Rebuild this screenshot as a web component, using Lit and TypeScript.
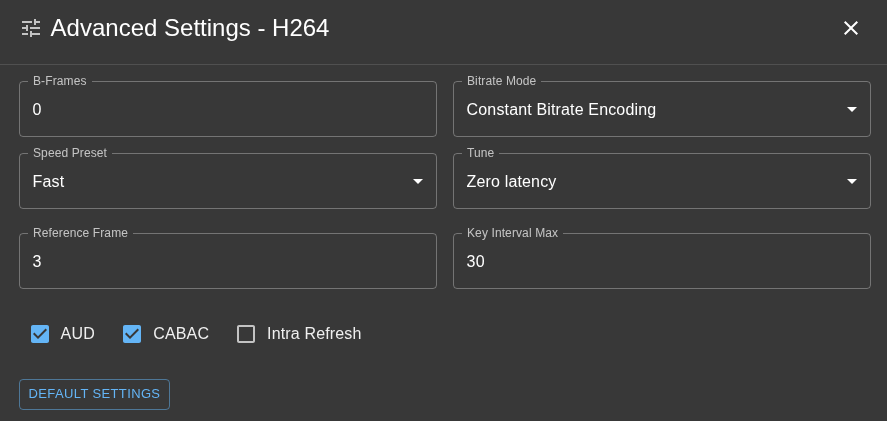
import { LitElement, html, svg, css } from "lit";
import { customElement } from "lit/decorators.js";

const caret = html`<svg class="caret" viewBox="0 0 24 24"><path d="M7 10l5 5 5-5z"></path></svg>`;

@customElement("app-root")
export class AppRoot extends LitElement {
  static styles = css`
    :host { display: block; width: 887px; height: 421px; overflow: hidden; background: #383838; color: #fff;
      font-family: "Liberation Sans", Arial, sans-serif; }
    * { box-sizing: border-box; }
    .layer { will-change: transform; }
    .head { height: 65px; border-bottom: 1px solid rgba(255,255,255,0.12); display: flex; align-items: center;
      padding: 0 24px 9px 19px; gap: 8px; }
    .head h2 { margin: 0 0 0 -0.4px; font-size: 24px; font-weight: 400; line-height: 32px; letter-spacing: 0; flex: 1; color: #fff; }
    .tune { width: 24px; height: 24px; fill: rgba(255,255,255,0.7); flex: none; }
    .close { width: 24px; height: 24px; fill: #fff; flex: none; }
    .body { padding: 16px 16px 0 19px; }
    .grid { display: grid; grid-template-columns: 418px 418px; column-gap: 16px; }
    .g1 { row-gap: 16px; }
    .g2 { margin-top: 24px; }
    .field { position: relative; height: 56px; border: 1px solid rgba(255,255,255,0.3); border-radius: 4px;
      display: flex; align-items: center; padding: 2px 13px 0 12.6px; font-size: 16px; letter-spacing: 0.15px; color: #fff; }
    .label { position: absolute; left: 8px; top: -8px; padding: 0 5px; background: #383838; font-size: 12px; line-height: 14px;
      letter-spacing: 0.11px; color: rgba(255,255,255,0.7); }
    .caret { position: absolute; right: 6px; top: 15px; width: 24px; height: 24px; fill: #fff; }
    .checks { display: flex; align-items: center; height: 42px; margin-top: 24px; font-size: 16px; letter-spacing: 0.15px; color: rgba(255,255,255,0.92); }
    .check { display: flex; align-items: center; }
    .check svg { width: 24px; height: 24px; margin: 0 9px; flex: none; }
    .check.a span { margin: 0 0.4px 0 -0.4px; }
    .check.a, .check.b { margin-right: 16px; }
    .on { fill: #64b5f6; }
    .off { fill: rgba(255,255,255,0.7); }
    .btn { display: inline-flex; align-items: center; justify-content: center; margin-top: 24px; height: 31px; width: 151px;
      border: 1px solid rgba(100,181,246,0.5); border-radius: 4px; background: transparent; color: #64b5f6; padding: 0 0 2px;
      font: 400 13px "Liberation Sans", Arial, sans-serif; letter-spacing: 0.37px; text-transform: uppercase; }
  `;

  private field(label: string, value: string, select = false) {
    return html`<div class="field"><span class="label">${label}</span><span>${value}</span>${select ? caret : ""}</div>`;
  }

  private check(label: string, on: boolean, cls: string) {
    return html`<label class="check ${cls}">
      <svg viewBox="0 0 24 24" class=${on ? "on" : "off"}>
        ${on
          ? svg`<path d="M19 3H5c-1.11 0-2 .9-2 2v14c0 1.1.89 2 2 2h14c1.11 0 2-.9 2-2V5c0-1.1-.89-2-2-2zm-9 14l-5-5 1.41-1.41L10 14.17l7.59-7.59L19 8l-9 9z"></path>`
          : svg`<path d="M19 5v14H5V5h14m0-2H5c-1.1 0-2 .9-2 2v14c0 1.1.9 2 2 2h14c1.1 0 2-.9 2-2V5c0-1.1-.9-2-2-2z"></path>`}
      </svg><span>${label}</span></label>`;
  }

  render() {
    return html`
      <div class="layer">
      <div class="head">
        <svg class="tune" viewBox="0 0 24 24"><path d="M3 17v2h6v-2H3zM3 5v2h10V5H3zm10 16v-2h8v-2h-8v-2h-2v6h2zM7 9v2H3v2h4v2h2V9H7zm14 4v-2H11v2h10zm-6-4h2V7h4V5h-4V3h-2v6z"></path></svg>
        <h2>Advanced Settings - H264</h2>
        <svg class="close" viewBox="0 0 24 24"><path d="M19 6.41 17.59 5 12 10.59 6.41 5 5 6.41 10.59 12 5 17.59 6.41 19 12 13.41 17.59 19 19 17.59 13.41 12z"></path></svg>
      </div>
      <div class="body">
        <div class="grid g1">
          ${this.field("B-Frames", "0")}
          ${this.field("Bitrate Mode", "Constant Bitrate Encoding", true)}
          ${this.field("Speed Preset", "Fast", true)}
          ${this.field("Tune", "Zero latency", true)}
        </div>
        <div class="grid g2">
          ${this.field("Reference Frame", "3")}
          ${this.field("Key Interval Max", "30")}
        </div>
        <div class="checks">
          ${this.check("AUD", true, "a")}
          ${this.check("CABAC", true, "b")}
          ${this.check("Intra Refresh", false, "c")}
        </div>
        <button class="btn">Default Settings</button>
      </div>
      </div>
    `;
  }
}
